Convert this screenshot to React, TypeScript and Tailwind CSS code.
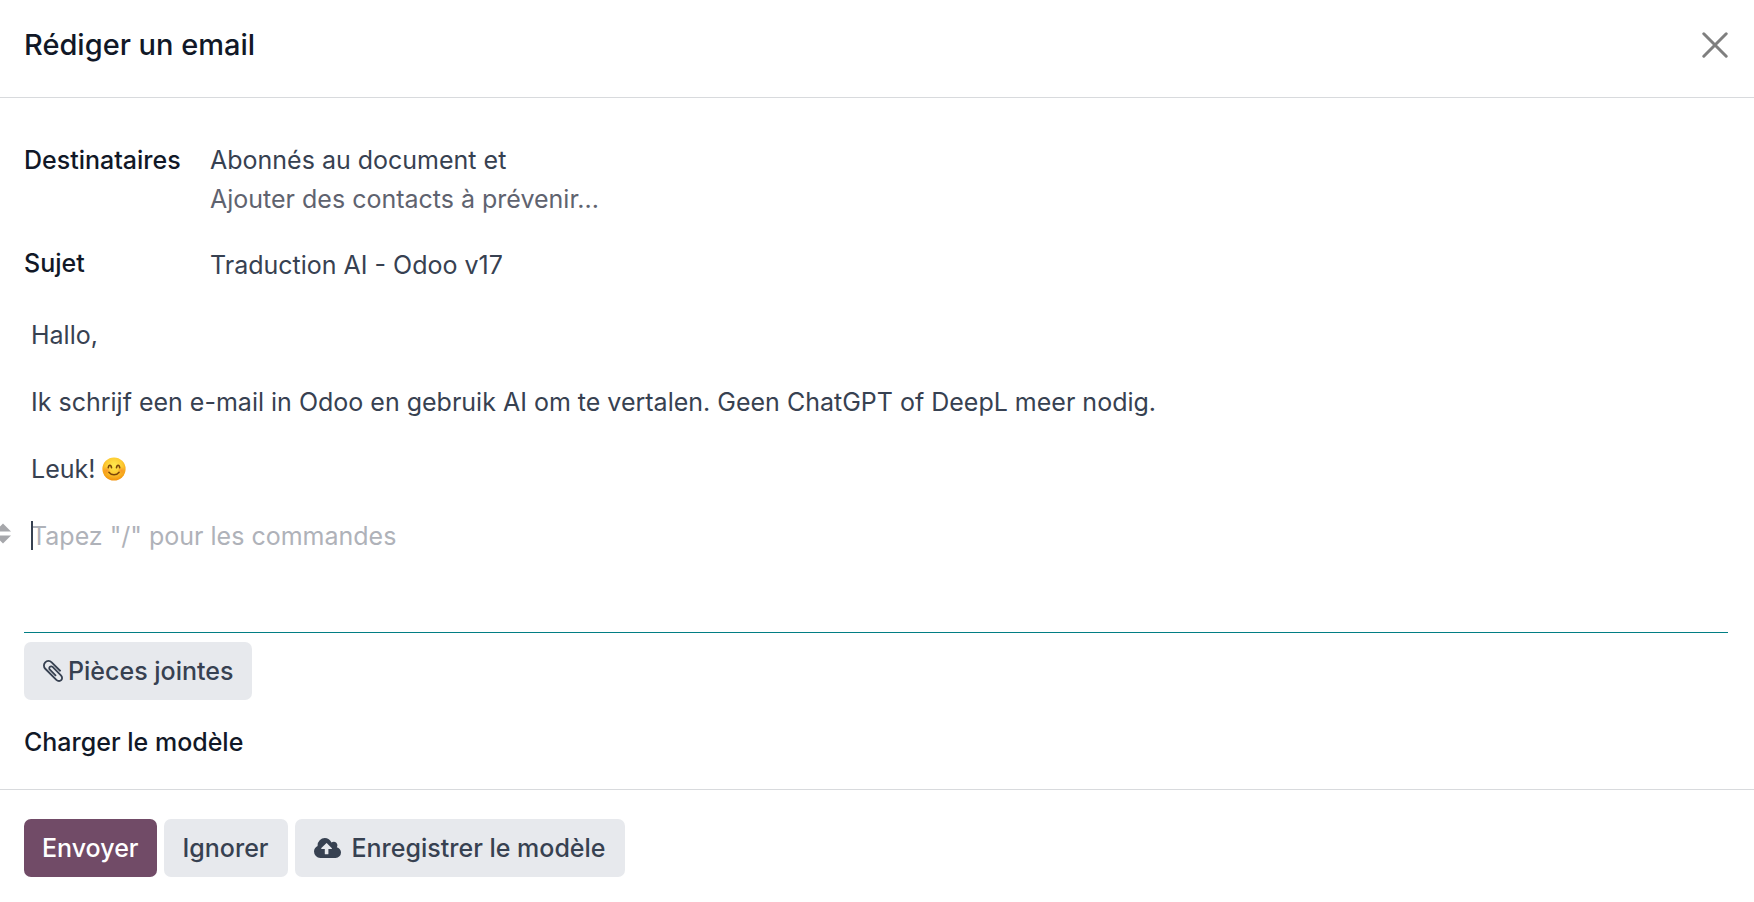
import type { ReactNode } from "react";

function CloseIcon() {
  return (
    <svg viewBox="0 0 26 26" className="size-[26px]" fill="none" stroke="#7f7f7f" strokeWidth="3" strokeLinecap="round" aria-hidden="true">
      <path d="M1.8 1.8 24.2 24.2M24.2 1.8 1.8 24.2" />
    </svg>
  );
}

function PaperclipIcon() {
  return (
    <svg viewBox="196 132 1400 1528" className="h-[22px] w-[20px]" fill="currentColor" aria-hidden="true">
      <path d="M1596 1385q0 117-79 196t-196 79q-135 0-235-100l-777-776q-113-115-113-271 0-159 110-270t269-111q158 0 273 113l605 606q10 10 10 22 0 16-30.5 46.5t-46.5 30.5q-13 0-23-10l-606-607q-79-77-181-77-106 0-179 75t-73 181q0 105 76 181l776 777q63 63 145 63 64 0 106-42t42-106q0-82-63-145l-581-581q-26-24-60-24-29 0-48 19t-19 48q0 32 25 59l410 410q10 10 10 22 0 16-31 47t-47 31q-12 0-22-10l-410-410q-63-61-63-149 0-82 57-139t139-57q88 0 149 63l581 581q100 98 100 235z" />
    </svg>
  );
}

function CloudUploadIcon() {
  return (
    <svg viewBox="-64 128 1920 1408" className="h-5 w-[27px]" fill="currentColor" aria-hidden="true">
      <path d="M1216 864q0-14-9-23L855 489q-9-9-23-9t-23 9L458 840q-10 12-10 24 0 14 9 23t23 9h224v352q0 13 9.5 22.5t22.5 9.5h192q13 0 22.5-9.5t9.5-22.5V896h224q13 0 22.5-9.5t9.5-22.5zm640 288q0 159-112.5 271.5T1472 1536H384q-185 0-316.5-131.5T-64 1088q0-130 70-240t188-165q-2-30-2-43 0-212 150-362t362-150q156 0 285.5 87T1178 446q71-62 166-62 106 0 181 75t75 181q0 76-41 138 130 31 213.5 135.5T1856 1152z" />
    </svg>
  );
}

function SmileEmoji() {
  return (
    <svg viewBox="0 0 24 24" className="inline-block size-6 align-[-3px]" role="img" aria-label="😊">
      <defs>
        <radialGradient id="face" cx="0.5" cy="0.35" r="0.65">
          <stop offset="0" stopColor="#ffe94f" />
          <stop offset="0.55" stopColor="#fdcb32" />
          <stop offset="1" stopColor="#f2920c" />
        </radialGradient>
        <radialGradient id="blush">
          <stop offset="0" stopColor="#f4661b" stopOpacity="0.5" />
          <stop offset="1" stopColor="#f4661b" stopOpacity="0" />
        </radialGradient>
      </defs>
      <circle cx="12" cy="12" r="11.6" fill="url(#face)" />
      <circle cx="4.8" cy="13.6" r="4" fill="url(#blush)" />
      <circle cx="19.2" cy="13.6" r="4" fill="url(#blush)" />
      <g fill="none" stroke="#7a4408" strokeLinecap="round">
        <path strokeWidth="1.6" d="M6.300 10.600c.5-3.200 2.700-3.200 3.200 0M14.500 10.600c.5-3.200 2.700-3.200 3.200 0" />
        <path strokeWidth="1.500" d="M6.900 15.300c2.500 3.300 7.700 3.300 10.200 0" />
      </g>
    </svg>
  );
}

function Button({ primary, gap = "gap-2", children }: { primary?: boolean; gap?: string; children: ReactNode }) {
  const tone = primary ? "bg-[#714b67] px-[18px] text-white" : "bg-[#e7e9ed] px-[19px] text-[#374151]";
  return (
    <button type="button" className={`flex h-[58px] items-center rounded-[7px] font-medium ${gap} ${tone}`}>
      {children}
    </button>
  );
}

export default function App() {
  return (
    <form
      onSubmit={(e) => e.preventDefault()}
      className="min-h-screen overflow-x-hidden bg-white font-['Inter',sans-serif] text-[25px] leading-[39px] text-[#374151]"
    >
      <header className="flex h-[98px] items-center justify-between border-b border-[#d8dadd] pl-6 pr-[26px] pb-2">
        <h1 className="text-[29px] font-medium text-[#111827]">Rédiger un email</h1>
        <button type="button" aria-label="Fermer">
          <CloseIcon />
        </button>
      </header>

      <main className="pl-6 pr-[26px] pt-[43px]">
        <div className="grid grid-cols-[186px_1fr]">
          <label htmlFor="recipients" className="font-medium text-[#111827]">
            Destinataires
          </label>
          <div>
            <p>Abonnés au document et</p>
            <input
              id="recipients"
              placeholder="Ajouter des contacts à prévenir..."
              className="block h-[39px] w-full outline-none placeholder:text-[#5f636f]"
            />
          </div>
          <label htmlFor="subject" className="mt-[25px] font-medium text-[#111827]">
            Sujet
          </label>
          <input id="subject" defaultValue="Traduction AI - Odoo v17" className="mt-[27px] block h-[39px] w-full outline-none" />
        </div>

        <div role="textbox" aria-multiline="true" aria-label="Message" className="mt-[31px] flex h-[317px] flex-col gap-7 border-b border-[#017e84] px-[7px]">
          <p>Hallo,</p>
          <p>Ik schrijf een e-mail in Odoo en gebruik AI om te vertalen. Geen ChatGPT of DeepL meer nodig.</p>
          <p>
            Leuk! <SmileEmoji />
          </p>
          <p className="relative text-[#afb2b9]">
            <svg viewBox="0 0 16 24" className="absolute -left-[35px] top-[5px] h-6 w-4" fill="#a6a7ab" aria-hidden="true">
              <path d="M7 1.500 15 9.500H-1zM7 21.500-1 13.500h16z" />
            </svg>
            <span aria-hidden="true" className="absolute left-0 top-1 h-[29px] w-[2px] bg-[#374151]" />
            Tapez "/" pour les commandes
          </p>
        </div>

        <div className="mt-[9px] flex">
          <Button gap="gap-[5px]">
            <PaperclipIcon />
            Pièces jointes
          </Button>
        </div>

        <div className="mt-[23px] flex pb-[27px]">
          <label htmlFor="template" className="font-medium text-[#111827]">
            Charger le modèle
          </label>
          <input id="template" className="ml-6 min-w-0 flex-1 outline-none" />
        </div>
      </main>

      <footer className="flex gap-[7px] border-t border-[#d8dadd] px-6 pt-[29px]">
        <Button primary>Envoyer</Button>
        <Button>Ignorer</Button>
        <Button gap="gap-[11px]">
          <CloudUploadIcon />
          Enregistrer le modèle
        </Button>
      </footer>
    </form>
  );
}
